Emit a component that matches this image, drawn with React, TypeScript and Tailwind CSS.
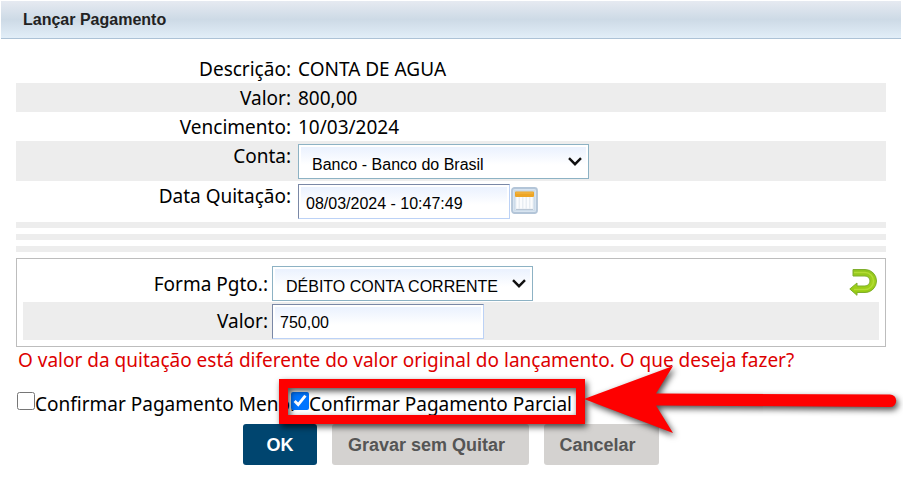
import type { ReactNode } from "react";

const selectStyle =
  "block w-full h-[35px] appearance-none border border-[#8db2c4] bg-linear-to-b from-[#e8f0fe] to-white to-60% pl-[13px] pr-5 pt-1.5 text-base leading-6 text-black shadow-[inset_0_0_0_2px_white] font-['Liberation_Sans',Arial,sans-serif]";

const inputStyle =
  "block w-[212px] h-[35px] border border-t-[#7a88a6] border-l-[#7a88a6] border-r-[#bcd2f6] border-b-[#bcd2f6] bg-linear-to-b from-[#e8f0fe] to-white to-60% px-[7px] pt-1 text-base leading-6 text-black shadow-[inset_0_0_0_2px_white] font-['Liberation_Sans',Arial,sans-serif]";

function SelectBox({ id, value, width }: { id: string; value: string; width: string }) {
  return (
    <div className={`relative ${width}`}>
      <select id={id} className={selectStyle} defaultValue={value}>
        <option>{value}</option>
      </select>
      <svg
        className="pointer-events-none absolute right-1.5 top-3 h-3 w-4"
        viewBox="0 0 16 12"
        fill="none"
        stroke="#111"
        strokeWidth="2.4"
      >
        <path d="M2 2.200 L8 8.200 L14 2.200" />
      </svg>
    </div>
  );
}

function InfoRow({ label, children, shaded }: { label: string; children: ReactNode; shaded?: boolean }) {
  return (
    <div className={`flex h-[29px] items-center ${shaded ? "bg-[#ededed]" : ""}`}>
      <dt className="w-[275px] shrink-0 text-right">{label}</dt>
      <dd className="pl-[7px]">{children}</dd>
    </div>
  );
}

function CalendarIcon() {
  return (
    <svg className="h-[27px] w-[27px]" viewBox="0 0 27 27">
      <rect x="1" y="1" width="25" height="25" rx="2.5" fill="#cddcea" stroke="#b3c5d8" strokeWidth="1.8" />
      <rect x="2.5" y="2.5" width="22" height="22" rx="1" fill="none" stroke="#d8e4f0" />
      <rect x="4.5" y="9" width="18" height="14" fill="#e9eef3" />
      <path d="M6.500 9.500v12M10 9.500v12M13.500 9.500v12M17 9.500v12M20.500 9.500v12" stroke="#fbfcfd" strokeWidth="2" />
      <path d="M5 22.500h17" stroke="#b9c6d4" />
      <rect x="4" y="4.500" width="19" height="5.500" rx="1" fill="#eda525" />
      <path d="M5 6h17" stroke="#f4b94c" />
    </svg>
  );
}

function UndoIcon() {
  return (
    <svg className="h-[30px] w-[30px]" viewBox="0 0 30 30">
      <defs>
        <linearGradient id="undo" x1="0" y1="0" x2="0" y2="1">
          <stop offset="0" stopColor="#8fc41c" />
          <stop offset="0.5" stopColor="#a2d21c" />
          <stop offset="1" stopColor="#93c90f" />
        </linearGradient>
      </defs>
      <path
        d="M4 3.500H16a11.500 11.500 0 0 1 0 23H8V29.300L0.800 23L8 17V20H16a5 5 0 0 0 0-10H4Z"
        fill="url(#undo)"
        stroke="#7fae2c"
        strokeLinejoin="round"
      />
      <path d="M5 6.500H16a8.500 8.500 0 0 1 0 17H5" fill="none" stroke="#b3dc35" strokeWidth="1.5" />
    </svg>
  );
}

// Red frame and arrow that point at the partial payment option
function Callout() {
  return (
    <>
      <div className="pointer-events-none absolute -top-[13px] -left-3 h-[45px] w-[306px] border-9 border-[#fe0000] drop-shadow-[2px_3px_3px_rgba(0,0,0,0.7)]" />
      <svg
        className="pointer-events-none absolute -top-7 left-[292px] h-[76px] w-[320px] overflow-visible drop-shadow-[2px_3px_3px_rgba(0,0,0,0.7)]"
        viewBox="0 0 320 76"
        fill="#fe0000"
      >
        <path d="M1 35L90 2L73 29.500L307 30.500A6 6 0 0 1 307 43L73 41.500L90 69Z" />
      </svg>
    </>
  );
}

export default function App() {
  return (
    <main className="min-h-[489px] bg-white text-[19px] leading-6 text-black font-['Noto_Sans','Open_Sans',sans-serif]">
      <header className="ml-px mr-0.5 border-t border-b border-t-white border-b-[#adc2d6] bg-linear-to-b from-[#e6eaf1] via-[#cddae6] to-[#e2eef8]">
        <h1 className="px-[22px] pt-[7px] pb-1.5 text-base font-bold leading-6 text-[#222] font-['Liberation_Sans',Arial,sans-serif]">
          Lançar Pagamento
        </h1>
      </header>

      <form className="pt-[15px] pr-[17px] pl-4" onSubmit={(e) => e.preventDefault()}>
        <dl>
          <InfoRow label="Descrição:">CONTA DE AGUA</InfoRow>
          <InfoRow label="Valor:" shaded>
            800,00
          </InfoRow>
          <InfoRow label="Vencimento:">10/03/2024</InfoRow>
        </dl>

        <div className="flex h-10 bg-[#ededed] pt-[3px]">
          <label htmlFor="conta" className="mr-[7px] w-[275px] shrink-0 text-right">
            Conta:
          </label>
          <SelectBox id="conta" value="Banco - Banco do Brasil" width="w-[291px]" />
        </div>
        <div className="flex h-[41px] pt-[3px]">
          <label htmlFor="data" className="mr-[7px] w-[275px] shrink-0 text-right">
            Data Quitação:
          </label>
          <input id="data" type="text" defaultValue="08/03/2024 - 10:47:49" className={inputStyle} />
          <button type="button" aria-label="Calendário" className="ml-px mt-[3px] h-[27px]">
            <CalendarIcon />
          </button>
        </div>

        <div className="mb-1.5 flex flex-col gap-1.5">
          <div className="h-1.5 bg-[#ededed]" />
          <div className="h-1.5 bg-[#ededed]" />
          <div className="h-1.5 bg-[#ededed]" />
        </div>

        <fieldset className="border border-[#bdbdbd] px-1.5 pt-[7px] pb-1.5">
          <div className="flex h-9 items-start">
            <label htmlFor="forma" className="mr-1 w-[245px] shrink-0 pt-1.5 text-right">
              Forma Pgto.:
            </label>
            <SelectBox id="forma" value="DÉBITO CONTA CORRENTE" width="w-[261px]" />
            <button type="button" aria-label="Desfazer" className="ml-auto">
              <UndoIcon />
            </button>
          </div>
          <div className="flex h-[38px] items-center bg-[#ededed]">
            <label htmlFor="valor" className="mr-1 w-[245px] shrink-0 text-right">
              Valor:
            </label>
            <input id="valor" type="text" defaultValue="750,00" className={inputStyle} />
          </div>
        </fieldset>

        <p className="pt-px pl-0.5 text-[#dd0000]">
          O valor da quitação está diferente do valor original do lançamento. O que deseja fazer?
        </p>

        <div className="flex h-[52px] pt-5 pl-px">
          <label className="flex w-[274px] shrink-0 whitespace-nowrap">
            <input type="checkbox" className="h-[18px] w-[18px] shrink-0" />
            <span>Confirmar Pagamento Menor</span>
          </label>
          <div className="relative">
            <label className="flex whitespace-nowrap">
              <input type="checkbox" defaultChecked className="h-[18px] w-[18px] shrink-0" />
              <span>Confirmar Pagamento Parcial</span>
            </label>
            <Callout />
          </div>
        </div>

        <div className="flex justify-center gap-[15px] text-lg font-bold font-['Liberation_Sans',Arial,sans-serif]">
          <button type="submit" className="h-[41px] w-[74px] rounded-[3px] bg-[#00456f] text-white">
            OK
          </button>
          <button type="button" className="h-[41px] w-[197px] rounded-[3px] bg-[#d4d2d0] pr-2 text-[#555]">
            Gravar sem Quitar
          </button>
          <button type="button" className="h-[41px] w-[115px] rounded-[3px] bg-[#d4d2d0] pr-2 text-[#555]">
            Cancelar
          </button>
        </div>
      </form>
    </main>
  );
}
